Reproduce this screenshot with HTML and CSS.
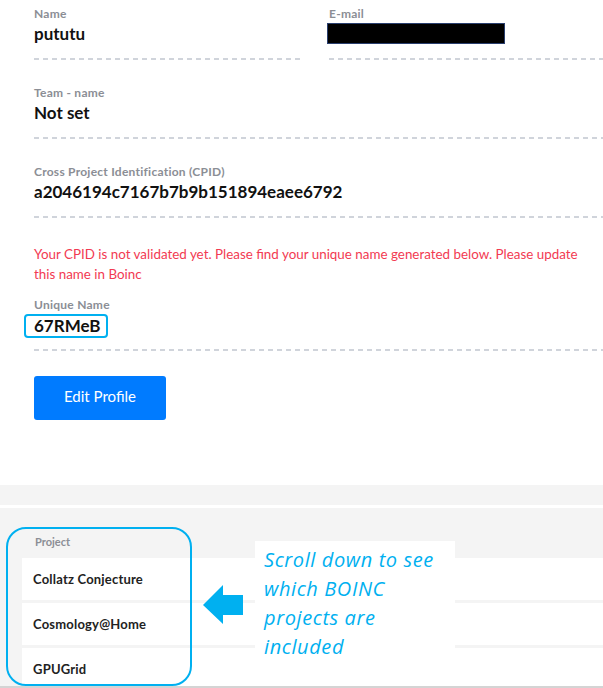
FILE: index.html
```html
<!DOCTYPE html>
<html lang="en">
<head>
    <meta charset="UTF-8">
    <meta name="viewport" content="width=device-width, initial-scale=1.0">
    <title>Profile</title>
    <link rel="stylesheet" href="styles.css">
</head>
<body>
    <div class="profile">
        <div class="field-row">
            <div class="field">
                <div class="field-label">Name</div>
                <div class="field-value">pututu</div>
            </div>
            <div class="field">
                <div class="field-label">E-mail</div>
                <div class="field-value"><span class="redacted"></span></div>
            </div>
        </div>

        <div class="field">
            <div class="field-label">Team - name</div>
            <div class="field-value">Not set</div>
        </div>

        <div class="field">
            <div class="field-label">Cross Project Identification (CPID)</div>
            <div class="field-value">a2046194c7167b7b9b151894eaee6792</div>
        </div>

        <p class="cpid-warning">Your CPID is not validated yet. Please find your unique name generated below. Please update this name in Boinc</p>

        <div class="field unique">
            <div class="field-label">Unique Name</div>
            <div class="field-value"><span class="marked">67RMeB</span></div>
        </div>

        <button class="edit-btn">Edit Profile</button>
    </div>

    <div class="band"></div>

    <div class="projects">
        <div class="col-head">Project</div>
        <div class="project-row">Collatz Conjecture</div>
        <div class="project-row">Cosmology@Home</div>
        <div class="project-row">GPUGrid</div>

        <!-- annotation drawn over the screenshot -->
        <div class="annot-box"></div>
        <div class="callout">
            <svg class="callout-arrow" width="40" height="39" viewBox="0 0 40 39">
                <polygon points="0,20 20,0 20,10 40,10 40,30 20,30 20,39" fill="#00b0f0"/>
            </svg>
            <div class="callout-text">Scroll down to see<br>which BOINC<br>projects are<br>included</div>
        </div>
    </div>
</body>
</html>
```

FILE: styles.css
```css
body {
    font-family: Lato, "Noto Sans", sans-serif;
    margin: 0;
    background-color: #fff;
    overflow: hidden;
}
.profile {
    padding: 7px 0 65px 34px;
}
.field-row {
    display: grid;
    grid-template-columns: 269px 1fr;
    gap: 26px;
    margin-bottom: 26px;
}
.field {
    padding-bottom: 15px;
    margin-bottom: 26px;
    background-image: linear-gradient(to right, #d0d4db 0, #d0d4db 5px, transparent 5px, transparent 9px);
    background-size: 9px 2px;
    background-repeat: repeat-x;
    background-position: left bottom;
}
.field-row .field {
    margin-bottom: 0;
}
.field-label {
    font-size: 12px;
    line-height: 14px;
    letter-spacing: 0.25px;
    font-weight: bold;
    color: #8b8e95;
}
.field-value {
    margin-top: 2px;
    font-size: 17px;
    line-height: 22px;
    font-weight: bold;
    color: #111;
}
.redacted {
    display: block;
    width: 176px;
    height: 19px;
    margin: 2px 0 -1px -2px;
    background-color: #000;
    border: 1px solid #2a3f6e;
}
.cpid-warning {
    margin: 0 12px 14px 0;
    font-size: 13.4px;
    line-height: 20px;
    color: #f23a52;
}
.unique {
    margin-bottom: 25px;
}
.marked {
    display: inline-block;
    vertical-align: top;
    line-height: 20px;
    padding: 0 5px 0 8px;
    margin: 0 0 -2px -10px;
    border: 2px solid #00b0f0;
    border-radius: 4px;
}
.edit-btn {
    display: block;
    width: 132px;
    height: 44px;
    padding: 0 0 4px;
    background-color: #007bff;
    color: #fff;
    border: none;
    border-radius: 3px;
    font-family: Lato, "Noto Sans", sans-serif;
    font-size: 15px;
    cursor: pointer;
}
.band {
    height: 20px;
    background-color: #f4f4f4;
    border-bottom: 3px solid #fff;
}
.projects {
    position: relative;
    height: 151px;
    padding: 27px 0 0 22px;
    background-color: #f4f4f4;
    border-bottom: 2px solid #d4d4d4;
    overflow: hidden;
}
.col-head {
    padding-left: 13px;
    margin-bottom: 9px;
    font-size: 11px;
    line-height: 14px;
    font-weight: bold;
    color: #8b8e95;
}
.project-row {
    display: flex;
    align-items: center;
    height: 42px;
    margin-bottom: 3px;
    padding-left: 11px;
    background-color: #fff;
    font-size: 13px;
    letter-spacing: 0.2px;
    font-weight: bold;
    color: #222;
}
.project-row:last-of-type {
    height: 38px;
    margin-bottom: 0;
}
.annot-box {
    position: absolute;
    left: 6px;
    top: 19px;
    width: 182px;
    height: 155px;
    border: 2px solid #00b0f0;
    border-radius: 20px;
}
.callout {
    position: absolute;
    left: 203px;
    top: 33px;
    display: flex;
    gap: 12px;
}
.callout-arrow {
    margin-top: 44px;
}
.callout-text {
    width: 191px;
    padding: 4px 0 4px 9px;
    background-color: #fff;
    font-family: "Open Sans", sans-serif;
    font-style: italic;
    font-size: 20px;
    line-height: 29px;
    letter-spacing: 0.6px;
    color: #00b0f0;
}
```
